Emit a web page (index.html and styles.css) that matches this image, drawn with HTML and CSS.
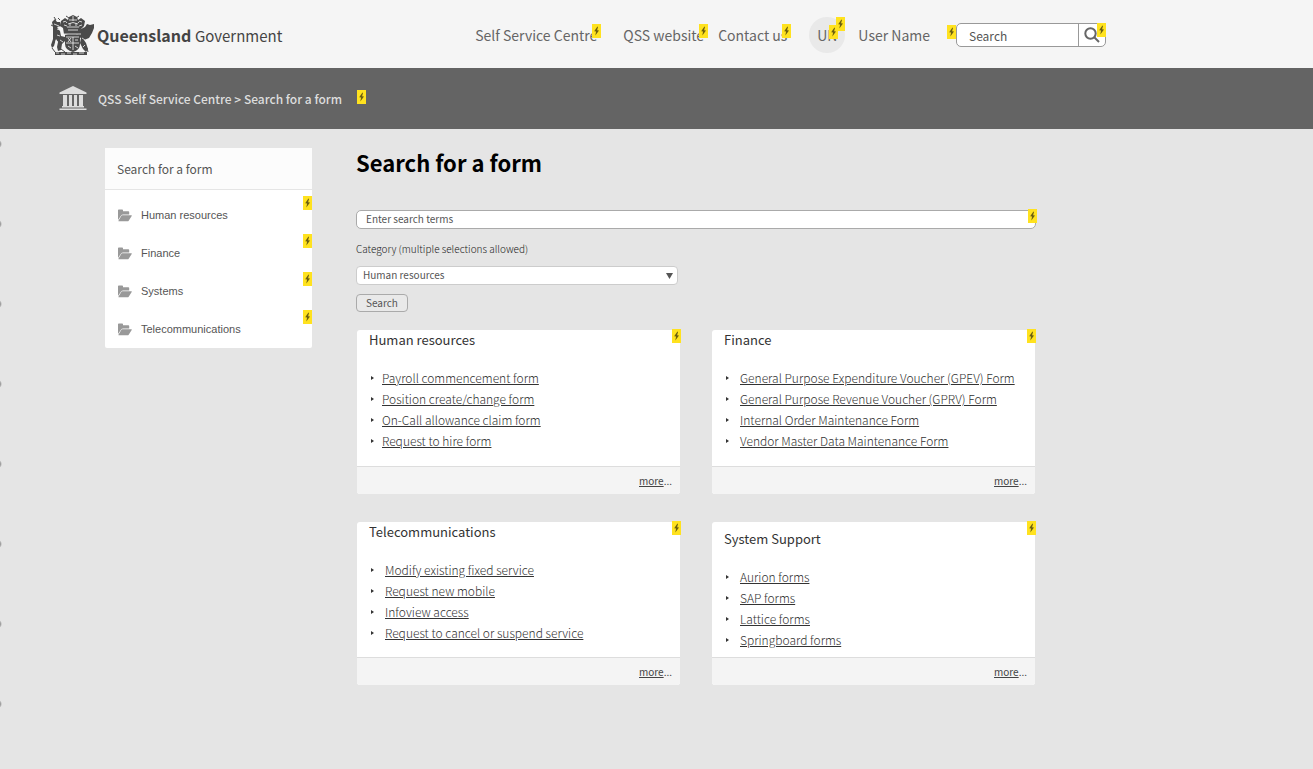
FILE: index.html
```html
<!DOCTYPE html>
<html lang="en">
<head>
<meta charset="utf-8">
<title>Search for a form</title>
<link rel="stylesheet" href="styles.css">
</head>
<body>
<svg class="defs" aria-hidden="true">
  <symbol id="bolt" viewBox="0 0 9 14"><path d="M5.400 2.500 2.200 7.200l1.900.3-.8 4 3.700-5-1.900-.3.900-3.300z"/></symbol>
  <symbol id="folder" viewBox="0 0 14 13"><path d="M0 1.200Q0 .4.8.4h3.400q.8 0 .8.8v1h5.400q.8 0 .8.8v2.500H5.200Q3.700 5.500 2.900 6.700L0 11z"/><path d="M4.200 6.200h9q1 0 .5.800l-3 4.700q-.4.600-1.200.6H.9q-.8 0-.3-.7l2.800-4.900q.3-.5.8-.5z"/></symbol>
</svg>
<header class="top">
  <a class="brand" href="#">
    <svg class="crest" viewBox="0 0 43 40" aria-hidden="true">
      <g fill="#4a4a4a">
        <path d="M1 7 4 4l2 3 3 0 1 4-4 1 3 4 1 5 4 1v4l-3 3-1 6-3 1-1-4 1-5-2-3-2 7-2 2-1-3 2-6V16L2 12z"/>
        <path d="M30 14l4-2 2-3 3 1 4-1 0 4-2 5-3 5-5 2 2 3 2 6-2 3-3-3-3-6 1-5-4-2 1-4z"/>
        <path d="M14 20h15v9q0 6-7 8-8-2-8-8z"/>
        <path d="M4 37h32v3H4z"/>
        <path d="M10 6l4-3 3 2 1-3 4-2 4 2 1 3 3-2 4 3-1 5-3 3-1 5-8 2-8-2-1-6-3-2z"/>
      </g>
      <g fill="none" stroke="#f5f5f5" stroke-width=".8">
        <path d="M12 7q3-2 4 1M31 7q-3-2-4 1M18 5h8M17 9q5-3 10 0M16 12h12M17 15h10M22 1v5M19 8v3M25 8v3M13 10l3 1M31 10l-3 1"/>
        <path d="M13 19h17M15 22h13M15 28h13M22 22v13M17 23l3 4M20 23l-3 4M24 25h3M24 31l3 2M17 31l3 2"/>
        <path d="M3 9l5 2M6 14l3 1M6 20l3 1M4 26l3 1M9 25l3 2M31 23l3 2M34 30l-2 2"/>
        <path d="M5 38h3M10 39h4M16 38h4M22 39h4M28 38h5"/>
      </g>
      <g fill="none" stroke="#4a4a4a"><path d="M0 10l2 1M3 2l2 3M7 3l2 2M15 1l3 2M28 1l-3 2M1 33l3 4M10 34l4 3M36 33l1 4"/></g>
    </svg>
    <span class="wordmark"><b>Queensland</b> <span class="gov">Government</span></span>
  </a>
  <nav class="nav">
    <a href="#">Self Service Centre<svg class="flash"><use href="#bolt"/></svg></a>
    <a href="#">QSS website<svg class="flash"><use href="#bolt"/></svg></a>
    <a href="#">Contact us<svg class="flash"><use href="#bolt"/></svg></a>
    <a class="avatar" href="#">UN<svg class="flash"><use href="#bolt"/></svg><svg class="flash flash-upper"><use href="#bolt"/></svg></a>
    <a href="#">User Name</a>
  </nav>
  <form class="site-search">
    <svg class="flash flash-before"><use href="#bolt"/></svg>
    <input type="text" placeholder="Search" aria-label="Search site">
    <button type="button" aria-label="Go">
      <svg class="lens" viewBox="0 0 16 16"><circle cx="6.500" cy="6.500" r="5.200"/><path d="M10.500 10.500 15 15"/></svg>
      <svg class="flash flash-corner"><use href="#bolt"/></svg>
    </button>
  </form>
</header>
<div class="crumbs">
  <svg class="bank" viewBox="0 0 28 25" aria-hidden="true"><path d="M14 0 27.500 6.500V8H.5V6.500zM4 9h4v11H4zM10 9h3v11h-3zM15 9h3v11h-3zM20 9h4v11h-4zM3 20h22v1.500H3zM.5 22.500h27V24H.5z"/></svg>
  <span class="trail">QSS Self Service Centre &gt; Search for a form</span>
  <svg class="flash flash-inline"><use href="#bolt"/></svg>
</div>
<div class="page">
  <aside class="side">
    <div class="side-head">Search for a form</div>
    <ul>
      <li><svg class="folder"><use href="#folder"/></svg><a href="#">Human resources</a><svg class="flash flash-row"><use href="#bolt"/></svg></li>
      <li><svg class="folder"><use href="#folder"/></svg><a href="#">Finance</a><svg class="flash flash-row"><use href="#bolt"/></svg></li>
      <li><svg class="folder"><use href="#folder"/></svg><a href="#">Systems</a><svg class="flash flash-row"><use href="#bolt"/></svg></li>
      <li><svg class="folder"><use href="#folder"/></svg><a href="#">Telecommunications</a><svg class="flash flash-row"><use href="#bolt"/></svg></li>
    </ul>
  </aside>
  <main>
    <h1>Search for a form</h1>
    <form class="finder">
      <div class="terms">
        <input type="text" placeholder="Enter search terms" aria-label="Search terms">
        <svg class="flash flash-corner"><use href="#bolt"/></svg>
      </div>
      <label for="category">Category (multiple selections allowed)</label>
      <div class="picker">
        <select id="category"><option>Human resources</option><option>Finance</option><option>Systems</option><option>Telecommunications</option></select>
        <svg class="caret" viewBox="0 0 7 6"><path d="M0 0h7L3.500 6z"/></svg>
      </div>
      <button type="button">Search</button>
    </form>
    <div class="cards">
      <section class="card tight">
        <h2>Human resources</h2>
        <ul>
          <li><a href="#">Payroll commencement form</a></li>
          <li><a href="#">Position create/change form</a></li>
          <li><a href="#">On-Call allowance claim form</a></li>
          <li><a href="#">Request to hire form</a></li>
        </ul>
        <footer><a href="#">more</a>...</footer>
        <svg class="flash flash-corner"><use href="#bolt"/></svg>
      </section>
      <section class="card roomy">
        <h2>Finance</h2>
        <ul>
          <li><a href="#">General Purpose Expenditure Voucher (GPEV) Form</a></li>
          <li><a href="#">General Purpose Revenue Voucher (GPRV) Form</a></li>
          <li><a href="#">Internal Order Maintenance Form</a></li>
          <li><a href="#">Vendor Master Data Maintenance Form</a></li>
        </ul>
        <footer><a href="#">more</a>...</footer>
        <svg class="flash flash-corner"><use href="#bolt"/></svg>
      </section>
      <section class="card">
        <h2>Telecommunications</h2>
        <ul>
          <li><a href="#">Modify existing fixed service</a></li>
          <li><a href="#">Request new mobile</a></li>
          <li><a href="#">Infoview access</a></li>
          <li><a href="#">Request to cancel or suspend service</a></li>
        </ul>
        <footer><a href="#">more</a>...</footer>
        <svg class="flash flash-corner"><use href="#bolt"/></svg>
      </section>
      <section class="card lowered">
        <h2>System Support</h2>
        <ul>
          <li><a href="#">Aurion forms</a></li>
          <li><a href="#">SAP forms</a></li>
          <li><a href="#">Lattice forms</a></li>
          <li><a href="#">Springboard forms</a></li>
        </ul>
        <footer><a href="#">more</a>...</footer>
        <svg class="flash flash-corner"><use href="#bolt"/></svg>
      </section>
    </div>
  </main>
</div>
</body>
</html>
```
FILE: styles.css
```css
* { box-sizing: border-box; }
body {
  margin: 0;
  min-height: 100vh;
  background: #e5e5e5;
  color: #444;
  font-family: "Noto Sans CJK SC", "Open Sans", sans-serif;
  font-size: 12px;
}
.defs { position: absolute; width: 0; height: 0; }
a { color: inherit; }
ul { list-style: none; margin: 0; padding: 0; }
input, select, button { font: inherit; color: #555; }
input::placeholder { color: #555; opacity: 1; }

/* dotted ruler along the left edge */
body::before {
  content: "";
  position: absolute;
  top: 104px;
  left: 0;
  width: 2px;
  height: 640px;
  background: radial-gradient(circle at -3px 40px, #888 3px, transparent 5px) 0 0 / 2px 80px;
}

.flash {
  position: absolute;
  width: 9px;
  height: 14px;
  background: #ffe21f;
  fill: #6b5f10;
}

.top {
  display: flex;
  align-items: center;
  height: 68px;
  padding: 2px 207px 0 51px;
  background: #f5f5f5;
  color: #666;
}
.brand { display: flex; align-items: center; gap: 3px; color: #444; text-decoration: none; }
.crest { width: 43px; height: 40px; }
.wordmark { font-size: 16px; line-height: 24px; white-space: nowrap; }
.gov { font-size: 15px; }
.nav { display: flex; align-items: center; margin-left: auto; font-size: 14px; line-height: 24px; white-space: nowrap; }
.nav a { position: relative; margin-right: 26px; text-decoration: none; }
.nav a:nth-child(2) { margin-right: 14px; }
.nav a:nth-child(3) { margin-right: 22px; }
.nav .flash { top: 1px; right: -4px; }
.nav .avatar {
  width: 36px;
  height: 36px;
  margin-right: 13px;
  border-radius: 50%;
  background: #e9e9e9;
  line-height: 36px;
  text-align: center;
}
.nav .avatar .flash { top: 8px; right: 7px; }
.nav .avatar .flash-upper { top: 0; right: 0; }
.site-search {
  position: relative;
  display: flex;
  height: 24px;
  width: 150px;
  border: 1px solid #999;
  border-radius: 5px;
  background: #fff;
}
.site-search input { flex: 1; min-width: 0; padding: 0 12px; border: 0; background: none; }
.site-search button { position: relative; width: 27px; padding: 0; border: 0; border-left: 1px solid #999; background: none; }
.lens { display: block; width: 16px; height: 16px; margin-left: 5px; fill: none; stroke: #666; stroke-width: 2; }
.flash-before { top: 1px; left: -10px; }
.flash-corner { top: -1px; right: -1px; }

.crumbs {
  display: flex;
  align-items: center;
  height: 61px;
  padding-left: 59px;
  background: #646464;
  color: #ddd;
}
.bank { width: 28px; height: 25px; fill: #ddd; }
.trail { margin: 0 15px 0 11px; line-height: 20px; font-weight: 500; }
.flash-inline { position: static; margin-bottom: 4px; }

.page {
  display: grid;
  grid-template-columns: 207px minmax(0, 1fr);
  gap: 44px;
  align-items: start;
  padding: 19px 277px 24px 105px;
}
.side { background: #fff; border-radius: 2px; color: #555; }
.side-head { padding: 10px 12px; line-height: 21px; background: #fcfcfc; border-bottom: 1px solid #e5e5e5; }
.side ul { padding: 6px 0 0; }
.side li { position: relative; display: flex; align-items: center; gap: 9px; height: 38px; padding-left: 13px; }
.side a { font-family: "Liberation Sans", sans-serif; font-size: 11px; text-decoration: none; }
.folder { width: 14px; height: 13px; fill: #999; }
.flash-row { top: 0; right: 0; }

h1 { margin: 0; font-size: 22px; line-height: 28px; color: #000; }
.finder { margin-top: 34px; display: flex; flex-direction: column; align-items: flex-start; font-size: 10px; }
.finder label { margin: 12px 0 9px; line-height: 16px; color: #222; font-weight: 300; }
.terms { position: relative; width: 100%; }
.terms input { display: block; width: 100%; height: 19px; padding: 0 9px 2px; border: 1px solid #aaa; border-radius: 5px; background: #fff; }
.picker { position: relative; width: 322px; }
.picker select { appearance: none; display: block; width: 100%; height: 19px; padding: 0 6px 2px; border: 1px solid #ccc; border-radius: 4px; background: #fff; }
.caret { position: absolute; top: 7px; right: 5px; width: 7px; height: 6px; fill: #555; }
.finder button { height: 18px; margin-top: 9px; padding: 0 9px; border: 1px solid #aaa; border-radius: 4px; background: #e9e9e9; line-height: 14px; }

.cards { display: grid; grid-template-columns: 1fr 1fr; gap: 28px 32px; margin: 18px 1px 0; }
.card { position: relative; display: flex; flex-direction: column; background: #fff; border-radius: 3px; }
.card h2 { margin: 0 12px 17px; font-size: 13px; font-weight: 400; line-height: 20px; color: #333; }
.card ul { margin: 0 12px 14px; line-height: 21px; color: #333; }
.card li { display: flex; align-items: center; gap: 11px; font-weight: 300; }
.card li::before { content: ""; margin-left: 2px; border-left: 3px solid #333; border-top: 2px solid transparent; border-bottom: 2px solid transparent; }
.card a { text-underline-offset: 1px; }
.tight li { gap: 8px; }
.tight ul, .roomy ul { margin-bottom: 15px; }
.lowered h2 { margin-top: 7px; }
.lowered ul { margin-bottom: 7px; }
.card footer { margin-top: auto; padding: 0 8px; border-top: 1px solid #ddd; border-radius: 0 0 3px 3px; background: #f4f4f4; font-size: 10px; line-height: 27px; text-align: right; }
```
